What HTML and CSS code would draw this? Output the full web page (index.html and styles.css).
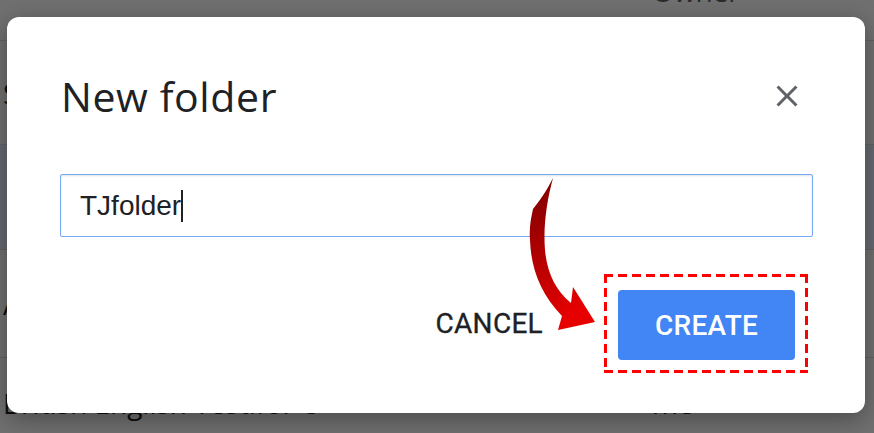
FILE: index.html
```html
<!DOCTYPE html>
<html lang="en">
<head>
<meta charset="utf-8">
<title>New folder</title>
<link rel="stylesheet" href="styles.css">
</head>
<body>
<div class="page">
  <div class="list-head"><span class="col-name"></span><span class="col-owner">Owner</span></div>
  <div class="list-row r1"><span class="col-name">S</span></div>
  <div class="list-row r2 selected"><span class="col-name"></span></div>
  <div class="list-row r3"><span class="col-name">A</span></div>
  <div class="list-row r4"><span class="col-name">British English Test.for U <svg class="people" width="24" height="24" viewBox="0 0 24 24"><path d="M16 11c1.66 0 2.99-1.34 2.99-3S17.66 5 16 5c-1.66 0-3 1.34-3 3s1.34 3 3 3zm-8 0c1.66 0 2.99-1.34 2.99-3S9.66 5 8 5C6.34 5 5 6.34 5 8s1.34 3 3 3zm0 2c-2.33 0-7 1.17-7 3.5V19h14v-2.5c0-2.33-4.67-3.5-7-3.5zm8 0c-.29 0-.62.02-.97.05 1.16.84 1.97 1.97 1.97 3.45V19h6v-2.5c0-2.33-4.67-3.5-7-3.5z" fill="#5f6368"/></svg></span><span class="col-owner">me</span></div>
</div>
<div class="scrim"></div>
<div class="dialog" role="dialog">
  <div class="dialog-head">
    <h1 class="dialog-title">New folder</h1>
    <button class="close" aria-label="Close">
      <svg width="36" height="36" viewBox="0 0 24 24"><path d="M19 6.41L17.59 5 12 10.59 6.41 5 5 6.41 10.59 12 5 17.59 6.41 19 12 13.41 17.59 19 19 17.59 13.41 12z" fill="#5f6368"/></svg>
    </button>
  </div>
  <div class="field"><span class="value">TJfolder</span><span class="caret"></span></div>
  <div class="actions">
    <button class="btn-text">CANCEL</button>
    <div class="highlight"><button class="btn-primary">CREATE</button></div>
  </div>
</div>
<svg class="arrow" width="874" height="433" viewBox="0 0 874 433">
  <defs>
    <linearGradient id="ag" x1="0" y1="0" x2="0.3" y2="1">
      <stop offset="0" stop-color="#7a0000"/>
      <stop offset="0.5" stop-color="#b00000"/>
      <stop offset="1" stop-color="#e60000"/>
    </linearGradient>
  </defs>
  <path d="M553,178 C546,192 538,203 533,209 C531,218 529,228 530,240 C531,268 540,293 562,316 L558,330 L595,322 L573,287 L571,303 C556,291 547,273 545,250 C543,226 547,200 553,178 Z" fill="url(#ag)"/>
</svg>
</body>
</html>
```
FILE: styles.css
```css
* { box-sizing: border-box; }
html, body { margin: 0; padding: 0; }
body {
  width: 874px;
  height: 433px;
  overflow: hidden;
  position: relative;
  background: #fff;
  font-family: "Open Sans", "Liberation Sans", sans-serif;
}
.page { display: flex; flex-direction: column; }
.list-head, .list-row {
  display: flex;
  align-items: flex-end;
  border-bottom: 1px solid #dadce0;
  padding-left: 3px;
  font-size: 28px;
  color: #202124;
}
.list-head { height: 41px; }
.list-head .col-owner { position: relative; top: -30px; font-weight: 500; color: #5f6368; }
.col-name { width: 649px; white-space: nowrap; display: flex; align-items: center; gap: 8px; }
.r1 { height: 104px; align-items: center; }
.r2 { height: 105px; }
.selected { background: #e8f0fe; }
.r3 { height: 108px; align-items: center; }
.r4 { height: 90px; align-items: center; }
.scrim {
  position: absolute; inset: 0;
  background: rgba(0, 0, 0, 0.56);
}
.dialog {
  position: absolute;
  left: 7px; top: 17px;
  width: 858px; height: 396px;
  background: #fff;
  border-radius: 12px;
  box-shadow: 0 6px 24px rgba(0,0,0,0.35);
  padding: 58px 0 40px 0;
  display: flex;
  flex-direction: column;
}
.dialog-head {
  display: flex;
  align-items: center;
  justify-content: space-between;
  padding: 0 60px 0 54px;
  height: 42px;
}
.dialog-title {
  margin: 0;
  font-family: "Open Sans", sans-serif;
  font-weight: 400;
  font-size: 41px;
  line-height: 42px;
  color: #202124;
  letter-spacing: 0.6px;
}
.close {
  border: 0; background: none; padding: 0; margin: 0;
  width: 36px; height: 36px; display: flex;
}
.field {
  margin: 57px 52px 0 53px;
  height: 63px;
  border: 1px solid #78a9f7;
  border-radius: 2px;
  box-shadow: inset 0 1px 2px rgba(0,0,0,0.12);
  padding-left: 19px;
  display: flex;
  align-items: center;
  font-family: "Liberation Sans", Arial, sans-serif;
  font-size: 28px;
  color: #202124;
}
.caret {
  display: inline-block;
  width: 2px;
  height: 32px;
  background: #202124;
}
.actions {
  margin-top: 37px;
  display: flex;
  justify-content: flex-end;
  align-items: center;
  padding-right: 57px;
}
.btn-text {
  border: 0; background: none; padding: 0;
  margin-right: 61px;
  font-family: Roboto, sans-serif;
  font-weight: 400;
  font-size: 28px;
  letter-spacing: 0.3px;
  color: #202124;
  -webkit-text-stroke: 0.3px #202124;
}
.highlight {
  padding: 16px 13px 13px 14px;
  display: flex;
  background:
    repeating-linear-gradient(90deg, #ff0000 0 9px, transparent 9px 14px) left top / 100% 3px no-repeat,
    repeating-linear-gradient(90deg, #ff0000 0 9px, transparent 9px 14px) left bottom / 100% 3px no-repeat,
    repeating-linear-gradient(180deg, #ff0000 0 9px, transparent 9px 14px) left top / 3px 100% no-repeat,
    repeating-linear-gradient(180deg, #ff0000 0 9px, transparent 9px 14px) right top / 3px 100% no-repeat;
}
.btn-primary {
  width: 177px; height: 70px;
  border: 0;
  border-radius: 4px;
  background: #4285f4;
  color: #fff;
  font-family: Roboto, sans-serif;
  font-weight: 500;
  font-size: 28px;
  letter-spacing: 0.3px;
}
.arrow { position: absolute; left: 0; top: 0; pointer-events: none; }
```
